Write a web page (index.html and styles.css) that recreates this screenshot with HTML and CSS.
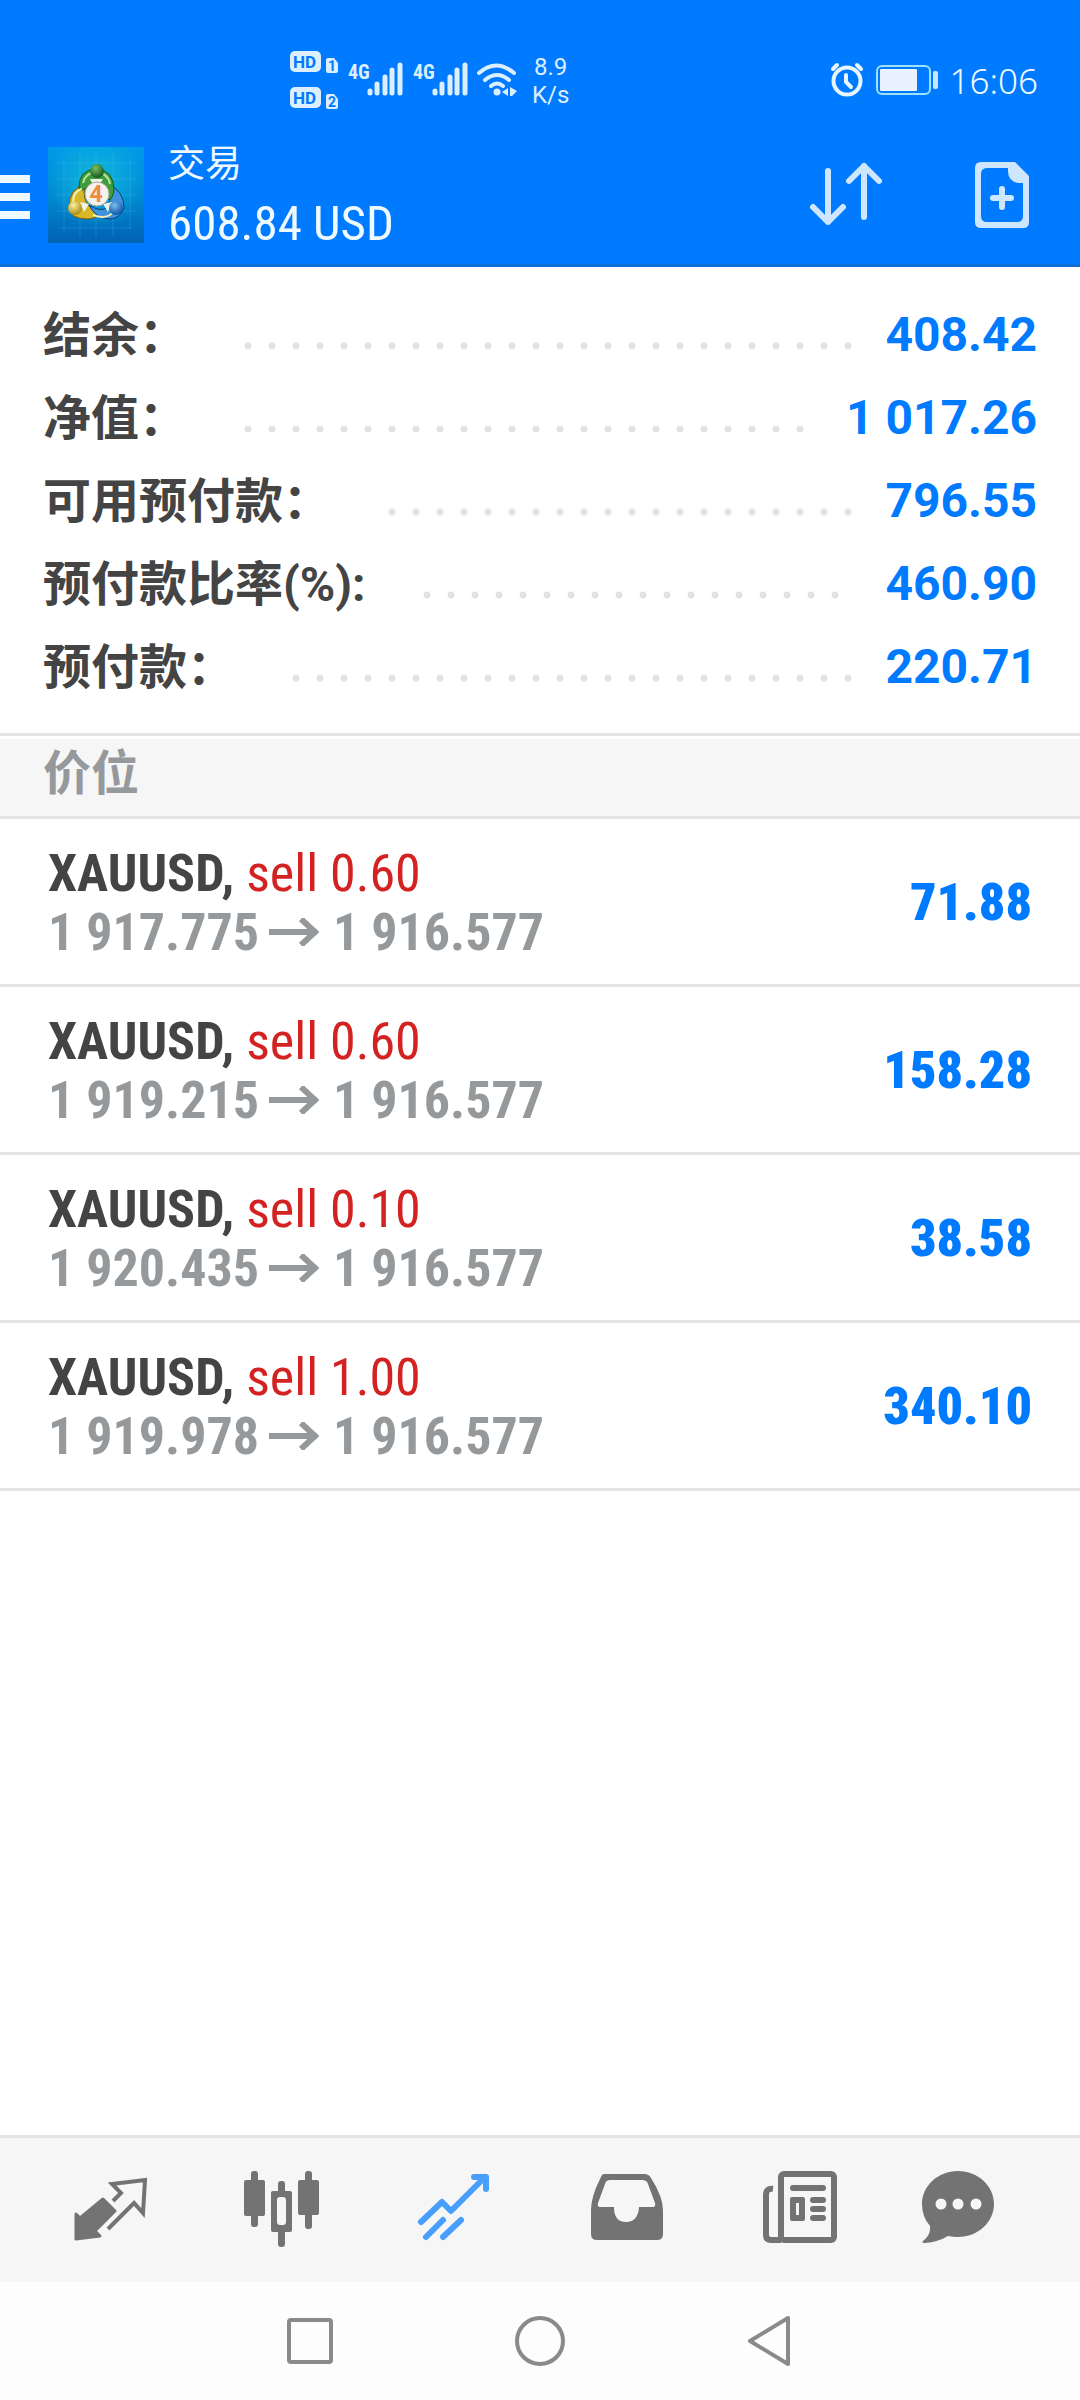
FILE: index.html
```html
<!DOCTYPE html>
<html lang="zh-CN">
<head>
<meta charset="utf-8">
<meta name="viewport" content="width=device-width, initial-scale=1">
<title>交易</title>
<link rel="stylesheet" href="styles.css">
</head>
<body>
<svg width="0" height="0" class="defs" aria-hidden="true">
  <symbol id="arrow" viewBox="0 0 52 28"><path d="M0 14h48M32 1l14 13-14 13" fill="none" stroke="currentColor" stroke-width="6"/></symbol>
</svg>
<header class="top">
  <div class="status">
    <div class="status-left">
      <svg class="hd" width="48" height="60" viewBox="0 0 48 60" aria-hidden="true">
        <g fill="#dcefff">
          <rect x="0" y="0" width="31" height="21" rx="5"/>
          <path d="M38 7h6l4 5v8q0 2-2 2h-8q-2 0-2-2v-11q0-2 2-2z"/>
          <rect x="0" y="36" width="31" height="21" rx="5"/>
          <path d="M38 43h6l4 5v8q0 2-2 2h-8q-2 0-2-2v-11q0-2 2-2z"/>
        </g>
        <g class="hd-text">
          <text x="3" y="17">HD</text><text x="3" y="53">HD</text>
          <text class="sim-text" x="38" y="20">1</text><text class="sim-text" x="38" y="56">2</text>
        </g>
      </svg>
      <div class="signal"><span class="net">4G</span>
        <svg width="36" height="34" viewBox="0 0 36 34" aria-hidden="true"><path d="M3 31v-2M10 31v-9M18 31v-16M25 31v-23M33 31v-28" stroke="#dcefff" stroke-width="5" stroke-linecap="round"/></svg>
      </div>
      <div class="signal"><span class="net">4G</span>
        <svg width="36" height="34" viewBox="0 0 36 34" aria-hidden="true"><path d="M3 31v-2M10 31v-9M18 31v-16M25 31v-23M33 31v-28" stroke="#dcefff" stroke-width="5" stroke-linecap="round"/></svg>
      </div>
      <svg class="wifi" width="40" height="34" viewBox="0 0 40 34" aria-hidden="true">
        <g fill="none" stroke="#dcefff" stroke-width="4" stroke-linecap="round"><path d="M2 10q17-15 35 0M8 17q12-10 24 0M14 23q6-5 12 0"/></g>
        <circle cx="20" cy="29" r="3.5" fill="#dcefff"/><path d="M31 25v8l-6-4zM33 24l7 4-5 5h-2z" fill="#dcefff"/>
      </svg>
      <div class="speed"><span>8.9</span><span>K/s</span></div>
    </div>
    <div class="status-right">
      <svg width="34" height="36" viewBox="0 0 34 36" aria-hidden="true"><g fill="none" stroke="#e8f6ff" stroke-linecap="round" stroke-width="4"><circle cx="17" cy="19" r="13.5"/><path d="M3 7l4-4M31 7l-4-4"/><path d="M16 13v7l5 5"/></g></svg>
      <svg width="62" height="30" viewBox="0 0 62 30" aria-hidden="true"><rect x="1" y="1" width="53" height="28" rx="5" fill="none" stroke="#9fe0ff" stroke-width="2"/><rect x="4" y="4" width="37" height="22" rx="1" fill="#e8f1fd"/><rect x="57" y="6" width="5" height="18" rx="2" fill="#c4e8ff"/></svg>
      <time class="clock">16:06</time>
    </div>
  </div>
  <div class="appbar">
    <button class="menu" aria-label="菜单"><span></span><span></span><span></span></button>
    <svg class="logo" width="96" height="96" viewBox="0 0 96 96" aria-hidden="true">
      <defs>
        <linearGradient id="bg" x1="0" y1="0" x2="0" y2="1"><stop offset="0" stop-color="#009be8"/><stop offset=".5" stop-color="#008ad2"/><stop offset="1" stop-color="#0062b4"/></linearGradient>
        <radialGradient id="glow" cx=".5" cy=".35" r=".5"><stop offset="0" stop-color="#12b9dc"/><stop offset="1" stop-color="#12b9dc" stop-opacity="0"/></radialGradient>
        <radialGradient id="gr" cx=".4" cy=".3" r=".7"><stop offset="0" stop-color="#7cc060"/><stop offset="1" stop-color="#145a20"/></radialGradient>
        <radialGradient id="ye" cx=".4" cy=".3" r=".7"><stop offset="0" stop-color="#fff0a0"/><stop offset="1" stop-color="#a88a14"/></radialGradient>
        <radialGradient id="bl" cx=".4" cy=".3" r=".7"><stop offset="0" stop-color="#7cbcf0"/><stop offset="1" stop-color="#0b58a8"/></radialGradient>
      </defs>
      <rect width="96" height="96" fill="url(#bg)"/><rect width="96" height="96" fill="url(#glow)"/>
      <path d="M16 10v76M32 6v84M48 6v84M65 6v84M82 12v70M8 16h80M8 32h80M8 48h80M8 64h80M12 81h72" stroke="#7fd4ff" stroke-opacity=".18"/>
      <path d="M37 39q-16 1-16 22 2 11 18 11 8 0 12-5l-10-8q-7-8-4-20z" fill="#d9b728" stroke="#6d5c10" stroke-width="1"/>
      <path d="M62 38q14 7 14 23-4 11-15 11-14-1-20-14 12 8 19 2 4-8 2-22z" fill="#3d93dd" stroke="#0b3f78" stroke-width="1"/>
      <path d="M31 40q0-17 17-18 18 1 18 21-1 8-5 10l-4-14q-8-8-17 0l-5 4q-4 1-4-3z" fill="#3f9d3c" stroke="#155c1c" stroke-width="1"/>
      <path d="M35 36q2-10 13-11 12 1 14 12" fill="none" stroke="#b9e2a0" stroke-width="2"/>
      <path d="M25 56q0-12 9-14M45 68q14 5 20-3" fill="none" stroke="#f5eeb4" stroke-width="2"/>
      <path d="M42 32h13l-5 8h-4zM32 55l9 2-5 8zM64 55l-9 2 5 8z" fill="#eef3ea"/>
      <circle cx="49" cy="24" r="7" fill="url(#gr)"/><circle cx="27" cy="61" r="7" fill="url(#ye)"/><circle cx="68" cy="61" r="7" fill="url(#bl)"/>
      <circle cx="49" cy="47" r="12" fill="#f4f2ee" stroke="#a8a898" stroke-width="1"/>
      <text class="logo-num" x="48" y="55" text-anchor="middle">4</text>
    </svg>
    <div class="title">
      <h1>交易</h1>
      <p>608.84 USD</p>
    </div>
    <button class="action" aria-label="排序"><svg width="78" height="72" viewBox="0 0 78 72"><g fill="none" stroke="#cfe6ff" stroke-width="6" stroke-linecap="round" stroke-linejoin="round"><path d="M21 12v51M6 48l15 15 15-15M57 58v-51M42 22l15-15 15 15"/></g></svg></button>
    <button class="action" aria-label="新订单"><svg width="54" height="66" viewBox="0 0 54 66"><path fill="#cfe6ff" fill-rule="evenodd" d="M6 0h34l14 14v46q0 6-6 6h-42q-6 0-6-6v-54q0-6 6-6zM12 6q-6 0-6 6v42q0 6 6 6h30q6 0 6-6v-33h-5q-10-2-10-12v-3z"/><path d="M27 27v18M18 36h18" stroke="#cfe6ff" stroke-width="6" stroke-linecap="round"/></svg></button>
  </div>
</header>

<main>
  <dl class="summary">
    <div class="sum-row"><dt>结余：</dt><dd class="leader"><i></i></dd><dd class="amount">408.42</dd></div>
    <div class="sum-row"><dt>净值：</dt><dd class="leader"><i></i></dd><dd class="amount">1 017.26</dd></div>
    <div class="sum-row"><dt>可用预付款：</dt><dd class="leader"><i></i></dd><dd class="amount">796.55</dd></div>
    <div class="sum-row"><dt>预付款比率(%):</dt><dd class="leader"><i></i></dd><dd class="amount">460.90</dd></div>
    <div class="sum-row"><dt>预付款：</dt><dd class="leader"><i></i></dd><dd class="amount">220.71</dd></div>
  </dl>
  <h2 class="section">价位</h2>
  <ul class="positions">
    <li><div><p class="deal">XAUUSD, <span>sell 0.60</span></p><p class="price">1 917.775 <svg role="img" aria-label="→"><use href="#arrow"/></svg> 1 916.577</p></div><strong>71.88</strong></li>
    <li><div><p class="deal">XAUUSD, <span>sell 0.60</span></p><p class="price">1 919.215 <svg role="img" aria-label="→"><use href="#arrow"/></svg> 1 916.577</p></div><strong>158.28</strong></li>
    <li><div><p class="deal">XAUUSD, <span>sell 0.10</span></p><p class="price">1 920.435 <svg role="img" aria-label="→"><use href="#arrow"/></svg> 1 916.577</p></div><strong>38.58</strong></li>
    <li><div><p class="deal">XAUUSD, <span>sell 1.00</span></p><p class="price">1 919.978 <svg role="img" aria-label="→"><use href="#arrow"/></svg> 1 916.577</p></div><strong>340.10</strong></li>
  </ul>
</main>

<nav class="tabs">
  <button aria-label="行情"><svg width="96" height="80" viewBox="0 0 96 80">
    <path fill="#737373" stroke="#737373" stroke-width="3" stroke-linejoin="round" d="M41 29l12 12-20 20 5 5-24 3V44l4 4z"/>
    <path fill="none" stroke="#737373" stroke-width="4" d="M51 31l8-8-9-9 33-4-2 33-9-10-26 26"/></svg></button>
  <button aria-label="图表"><svg width="96" height="80" viewBox="0 0 96 80">
    <g fill="#737373"><rect x="10" y="10" width="21" height="36" rx="2"/><rect x="17" y="1" width="7" height="56" rx="3"/><rect x="64" y="10" width="21" height="35" rx="2"/><rect x="71" y="1" width="7" height="58" rx="3"/><rect x="44" y="11" width="7" height="66" rx="3"/><rect x="37" y="21" width="21" height="41" rx="2"/></g><rect x="43" y="27" width="9" height="28" rx="3" fill="#f6f6f6"/></svg></button>
  <button aria-label="交易" aria-current="page"><svg width="96" height="80" viewBox="0 0 96 80">
    <g fill="none" stroke="#489ffb" stroke-width="6"><path stroke-linecap="round" stroke-linejoin="round" d="M15 52l21-20 9 9 34-34"/><path stroke-linecap="round" stroke-linejoin="round" d="M68 7h12v12"/><path stroke-linecap="round" d="M20 67l17-17M37 67l18-17"/></g></svg></button>
  <button aria-label="历史"><svg width="96" height="80" viewBox="0 0 96 80">
    <path fill="#737373" fill-rule="evenodd" d="M26 4h40q5 0 7 4 12 19 12 32v24q0 6-6 6H19q-6 0-6-6V40q0-13 9-31 2-5 4-5zM32 10q-4 0-5 4l-7 19q-1 4 2 4h14q0 15 12 15t13-15h14q3 0 2-4l-7-19q-1-4-6-4z"/></svg></button>
  <button aria-label="新闻"><svg width="96" height="80" viewBox="0 0 96 80">
    <g fill="none" stroke="#737373" stroke-width="6"><rect x="31" y="4" width="53" height="66" rx="3"/><path d="M23 19q-7-1-7 6v40q0 5 5 5h10"/></g>
    <g fill="#737373"><rect x="40" y="15" width="36" height="6" rx="3"/><rect x="60" y="27" width="16" height="6" rx="3"/><rect x="60" y="36" width="16" height="6" rx="3"/><rect x="60" y="45" width="16" height="6" rx="3"/><path fill-rule="evenodd" d="M42 27h11q2 0 2 2v20q0 2-2 2h-11q-2 0-2-2v-20q0-2 2-2zm4 6v12h3v-12z"/></g></svg></button>
  <button aria-label="消息"><svg width="96" height="80" viewBox="0 0 96 80">
    <path fill="#737373" d="M36 1c20 0 36 15 36 33s-16 33-36 33q-5 0-10-1-10 6-23 7-4 0-2-2 8-6 7-15-8-9-8-22c0-18 16-33 36-33z"/><g fill="#f6f6f6"><circle cx="19" cy="34" r="5.5"/><circle cx="36" cy="34" r="5.5"/><circle cx="54" cy="34" r="5.5"/></g></svg></button>
</nav>
<nav class="sysnav">
  <button aria-label="最近任务"><svg width="50" height="52" viewBox="0 0 50 52"><rect x="4" y="5" width="42" height="42" rx="2"/></svg></button>
  <button aria-label="主屏幕"><svg width="50" height="52" viewBox="0 0 50 52"><circle cx="25" cy="26" r="23"/></svg></button>
  <button aria-label="返回"><svg width="50" height="52" viewBox="0 0 50 52"><path d="M5 26L43 3v46z"/></svg></button>
</nav>
</body>
</html>
```
FILE: styles.css
```css
* { box-sizing: border-box; margin: 0; padding: 0; }

body {
  min-height: 100vh;
  display: flex;
  flex-direction: column;
  background: #fff;
  color: #444;
  font-family: Roboto, "Noto Sans CJK SC", sans-serif;
}

button { border: 0; background: none; display: flex; align-items: center; justify-content: center; }
svg { display: block; flex: none; }
main { flex: 1; }

.top { background: #007aff; color: #effaff; border-bottom: 3px solid #0f6fd6; }

.status { display: flex; justify-content: space-between; height: 132px; padding: 51px 42px 0 290px; }
.status-left, .status-right { display: flex; align-items: flex-start; }
.hd-text { font: 700 17px Roboto, sans-serif; fill: #007aff; }
.sim-text { font-size: 14px; }
.signal { display: flex; padding-top: 11px; margin-left: 10px; }
.net { width: 19px; font: 700 20px/20px "Roboto Condensed", "Liberation Sans Narrow", sans-serif; color: #dcefff; white-space: nowrap; }
.wifi { margin: 12px 0 0 9px; }
.speed { display: flex; flex-direction: column; align-items: center; margin-left: 15px; padding-top: 2px; font-size: 24px; line-height: 28px; color: #dcefff; }
.status-right { gap: 12px; padding-top: 11px; }
.status-right svg + svg { margin-top: 3px; }
.clock { font: 300 35px/38px "Noto Sans", sans-serif; }

.appbar { display: flex; align-items: center; height: 132px; padding: 0 51px 6px 0; }
.menu { flex-direction: column; align-items: stretch; gap: 10px; width: 30px; margin-right: 18px; padding-top: 4px; }
.menu span { height: 8px; background: #eefaff; }
.logo-num { font: 700 23px Roboto, sans-serif; fill: #f08a3c; }
.title { flex: 1; padding: 6px 0 0 24px; }
.title h1 { font-size: 37px; line-height: 52px; font-weight: 400; }
.title p { font: 400 49px/66px "Roboto Condensed", "Liberation Sans Narrow", sans-serif; }
.action + .action { margin-left: 90px; }

.summary { padding: 26px 43px 25px; border-bottom: 3px solid #e4e4e4; }
.sum-row { display: flex; align-items: center; height: 83px; font-size: 48px; font-weight: 700; white-space: nowrap; }
.sum-row dt { padding-bottom: 8px; }
.leader { flex: 1; display: grid; grid-template-columns: repeat(auto-fill, 24px); margin: 22px 10px 0 57px; }
.leader i { grid-column: 1 / -1; height: 8px; background: radial-gradient(circle at 4px 4px, #e2e2e2 3px, transparent 4px) 0 0 / 24px 8px; }
.amount { color: #007aff; }

.section { margin-top: 3px; height: 80px; padding-left: 43px; background: #f6f6f6; border-bottom: 3px solid #e4e4e4; color: #96999b; font-size: 48px; line-height: 70px; font-weight: 700; }

.positions { list-style: none; }
.positions li { display: flex; align-items: center; justify-content: space-between; height: 168px; padding: 2px 48px 0; border-bottom: 3px solid #e4e4e4; font: 700 52px/59px "Roboto Condensed", "Liberation Sans Narrow", sans-serif; white-space: nowrap; }
.deal span { color: #d32222; font-weight: 400; }
.price { color: #96999b; }
.price svg { display: inline-block; width: 52px; height: 28px; margin-left: -2px; vertical-align: 4px; }
.positions strong { color: #007aff; }
.defs { position: absolute; }

.tabs { display: flex; height: 147px; padding: 0 24px; background: #f6f6f6; border-top: 3px solid #e4e4e4; }
.tabs button { flex: 1; }
.sysnav { display: flex; height: 118px; padding: 0 18%; background: #fdfdfd; }
.sysnav button { flex: 1; }
.sysnav svg { fill: none; stroke: #8a8a8a; stroke-width: 4; stroke-linejoin: round; }
```
